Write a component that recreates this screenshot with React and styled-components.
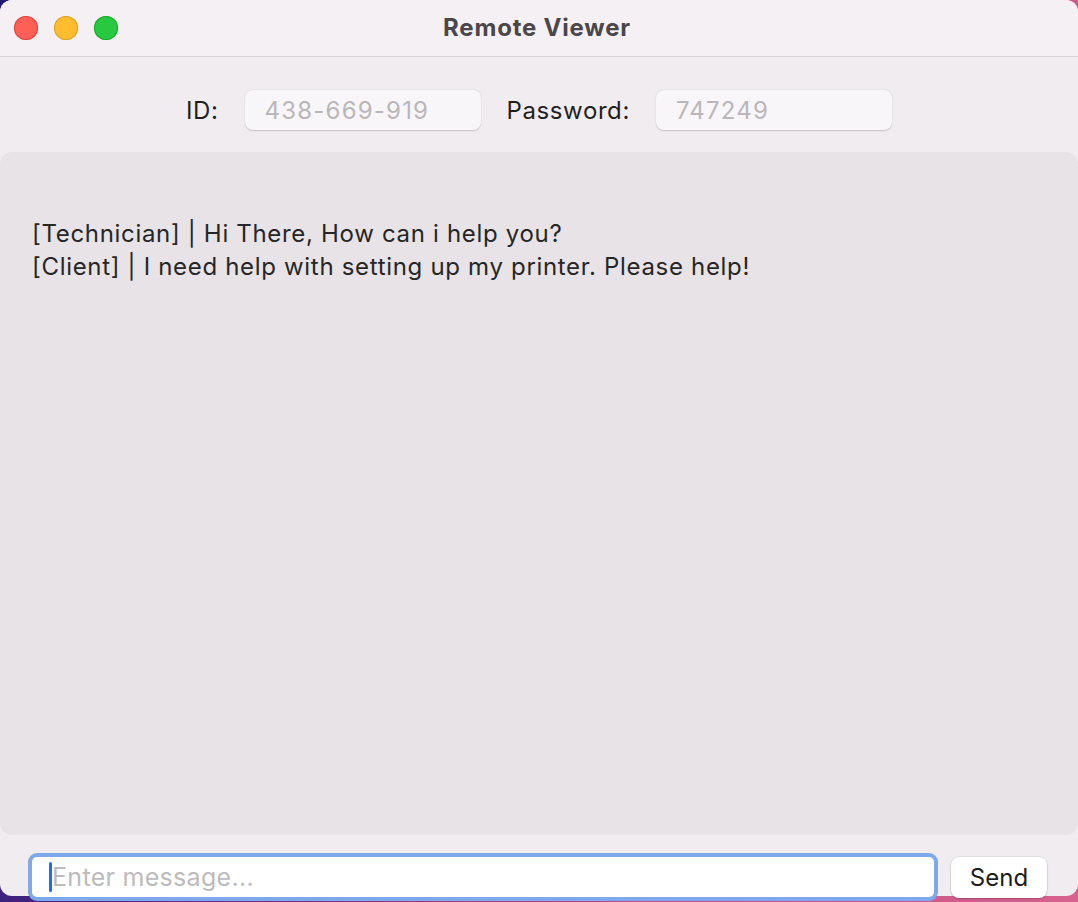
import React from 'react'
import styled, { createGlobalStyle } from 'styled-components';

const GlobalStyle = createGlobalStyle`
    html, body {
        margin: 0;
        padding: 0;
        height: 100%;
        overflow: hidden;
    }
    body {
        background: linear-gradient(100deg, #1c1b78 0%, #6b2a86 30%, #c04f86 65%, #d8628f 100%);
        font-family: Inter, "Noto Sans", "Liberation Sans", sans-serif;
    }
`

const messages = [
    '[Technician] | Hi There, How can i help you?',
    '[Client] | I need help with setting up my printer. Please help!',
]

export default function App() {
    return (
        <>
            <GlobalStyle />
            <Window>
                <TitleBar>
                    <Lights>
                        <Light color="#fe5f57" ring="#e0443e" />
                        <Light color="#febc2e" ring="#dea123" />
                        <Light color="#28c840" ring="#1aab29" />
                    </Lights>
                    <Title>Remote Viewer</Title>
                </TitleBar>
                <Header>
                    <Label>ID:</Label>
                    <Field placeholder="438-669-919" />
                    <Label gap>Password:</Label>
                    <Field placeholder="747249" />
                </Header>
                <ChatLog>
                    {messages.map((m, i) => <Line key={i}>{m}</Line>)}
                </ChatLog>
                <Footer>
                    <MessageBox>
                        <MessageInput placeholder="Enter message..." />
                    </MessageBox>
                    <SendButton>Send</SendButton>
                </Footer>
            </Window>
        </>
    )
}

const Window = styled.div`
    width: 1078px;
    height: 896px;
    background: #f1ecf0;
    border-radius: 12px;
    display: flex;
    flex-direction: column;
    overflow: visible;
`

const TitleBar = styled.div`
    position: relative;
    height: 56px;
    flex: none;
    background: #f5f0f4;
    border-bottom: 1px solid #d7d2d6;
    border-radius: 12px 12px 0 0;
    display: flex;
    align-items: center;
    justify-content: center;
`

const Lights = styled.div`
    position: absolute;
    left: 14px;
    top: 16px;
    display: flex;
    gap: 16px;
`

const Light = styled.span`
    width: 24px;
    height: 24px;
    border-radius: 50%;
    background: ${p => p.color};
    box-shadow: inset 0 0 0 1px ${p => p.ring};
`

const Title = styled.div`
    font-size: 24px;
    font-weight: 700;
    color: #4b464a;
    letter-spacing: 0.8px;
    margin-top: -2px;
    margin-right: 4px;
`

const Header = styled.div`
    height: 95px;
    flex: none;
    box-sizing: border-box;
    padding-top: 11px;
    display: flex;
    align-items: center;
    justify-content: center;
`

const Label = styled.span`
    font-size: 24px;
    letter-spacing: 0.6px;
    color: #1f1f1f;
    margin-left: ${p => p.gap ? '26px' : '0'};
    margin-right: 26px;
`

const Field = styled.input`
    width: 236px;
    height: 40px;
    box-sizing: border-box;
    border: none;
    border-radius: 8px;
    background: #f8f6f9;
    box-shadow: 0 0.5px 1.5px rgba(0, 0, 0, 0.18);
    padding: 0 20px;
    font-family: inherit;
    font-size: 24px;
    letter-spacing: 1.2px;
    outline: none;
    &::placeholder {
        color: #bab6ba;
    }
`

const ChatLog = styled.div`
    flex: 1;
    background: #e8e3e7;
    border-radius: 12px;
    padding: 65px 32px 0;
    font-size: 24px;
    letter-spacing: 0.68px;
    line-height: 33px;
    color: #262626;
`

const Line = styled.div``

const Footer = styled.div`
    height: 61px;
    flex: none;
    box-sizing: border-box;
    padding: 22px 0 0 32px;
    display: flex;
    align-items: flex-start;
`

const MessageBox = styled.div`
    position: relative;
    width: 902px;
    height: 40px;
    background: #fff;
    border-radius: 5px;
    box-shadow: 0 0 0 4px #7ea8ec;
    &::before {
        content: '';
        position: absolute;
        left: 17px;
        top: 5px;
        width: 3px;
        height: 30px;
        border-radius: 2px;
        background: #1d6ff2;
    }
`

const MessageInput = styled.input`
    width: 100%;
    height: 100%;
    box-sizing: border-box;
    border: none;
    background: transparent;
    padding: 0 0 0 20px;
    font-family: inherit;
    font-size: 25px;
    letter-spacing: 0.3px;
    outline: none;
    caret-color: transparent;
    &::placeholder {
        color: #bdbbbd;
    }
`

const SendButton = styled.button`
    margin-left: 17px;
    margin-top: 0;
    width: 96px;
    height: 41px;
    background: #fff;
    border: none;
    border-radius: 8px;
    box-shadow: 0 0 0 0.5px rgba(0, 0, 0, 0.12), 0 1px 2px rgba(0, 0, 0, 0.18);
    font-family: inherit;
    font-size: 24px;
    color: #1d1d1d;
    padding: 0;
`
